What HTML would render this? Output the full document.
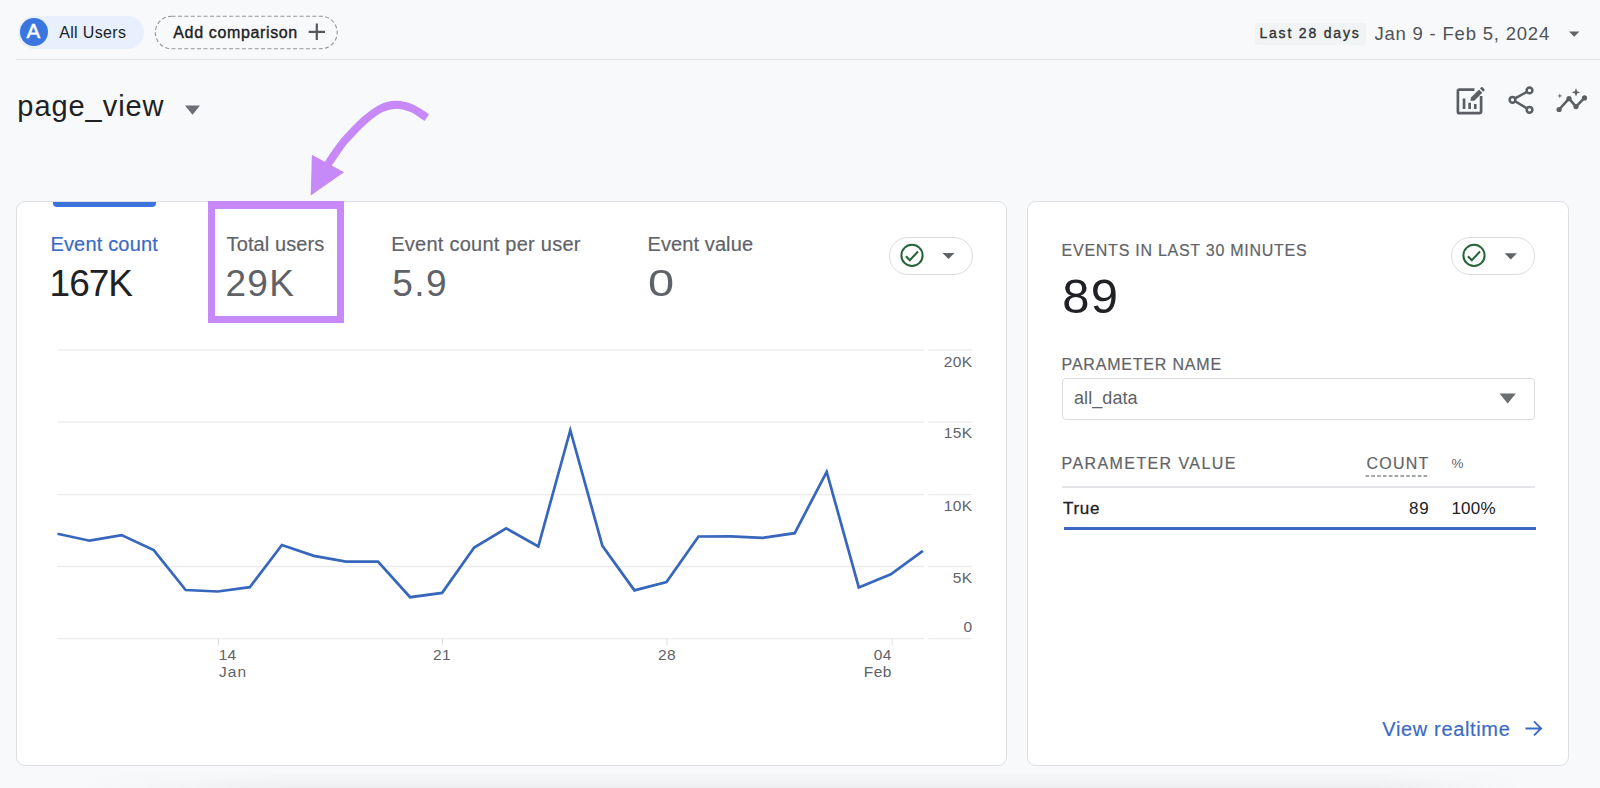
<!DOCTYPE html>
<html><head><meta charset="utf-8"><title>Analytics</title>
<style>
html,body{margin:0;padding:0;}
body{width:1600px;height:788px;overflow:hidden;position:relative;background:#f8f9fa;font-family:"Liberation Sans",sans-serif;}
.t{position:absolute;line-height:1;white-space:nowrap;}
.abs{position:absolute;box-sizing:border-box;}
.card{position:absolute;box-sizing:border-box;background:#fff;border:1px solid #dddfe3;border-radius:9px;}
svg{position:absolute;left:0;top:0;overflow:visible;}
</style></head><body>
<!--BOXES-->
<div class="abs" style="left:80px;top:771px;width:1440px;height:17px;background:linear-gradient(to bottom,rgba(60,64,67,0),rgba(60,64,67,.055));-webkit-mask-image:linear-gradient(to right,transparent,#000 15%,#000 90%,transparent);mask-image:linear-gradient(to right,transparent,#000 15%,#000 90%,transparent);"></div>
<div class="abs" style="left:16px;top:59px;width:1584px;height:1px;background:#dfe1e5;"></div>
<div class="abs" style="left:17.5px;top:15.5px;width:126.5px;height:33.7px;border-radius:17px;background:#e8f0fe;"></div>
<div class="abs" style="left:20px;top:18.2px;width:28px;height:28px;border-radius:14px;background:#3b76e0;"></div>
<div class="abs" style="left:1254.5px;top:22.5px;width:111.5px;height:22px;border-radius:3px;background:#f1f3f4;"></div>
<div class="card" style="left:15.5px;top:201px;width:991px;height:565px;"></div>
<div class="card" style="left:1027px;top:201px;width:542px;height:565px;"></div>
<div class="abs" style="left:53px;top:201.6px;width:103.2px;height:5.6px;border-radius:0 0 4px 4px;background:#3d74dc;"></div>
<div class="abs" style="left:208px;top:201px;width:135.8px;height:122.2px;border-style:solid;border-color:#c889f8;border-width:8px 7.4px 7.6px 7px;"></div>
<div class="abs" style="left:889px;top:236.5px;width:83.5px;height:38.5px;border-radius:20px;border:1px solid #dadce0;background:#fff;"></div>
<div class="abs" style="left:1451px;top:236.5px;width:83.5px;height:38.5px;border-radius:20px;border:1px solid #dadce0;background:#fff;"></div>
<div class="abs" style="left:1062px;top:378px;width:473px;height:41.5px;border-radius:4px;border:1px solid #dadce0;background:#fff;"></div>
<div class="abs" style="left:1062px;top:486px;width:473px;height:1.6px;background:#e4e6e9;"></div>
<div class="abs" style="left:1063.5px;top:527px;width:472.5px;height:3px;background:#3868c2;"></div>
<!--SVG-->
<svg width="1600" height="788" viewBox="0 0 1600 788">
<rect x="155.3" y="16.25" width="181.9" height="32.5" rx="16.25" fill="none" stroke="#92969b" stroke-width="1.1" stroke-dasharray="4 2.4"/>
<path d="M308.7 31.8H325M316.8 23.6V40" stroke="#53575b" stroke-width="2.2" fill="none"/>
<path d="M185 105.5h15l-7.5 9.3z" fill="#6b6f73"/>
<path d="M1569 31.5h10.4l-5.2 5.2z" fill="#5f6368"/>
<path d="M942.5 253h12l-6 6z" fill="#5f6368"/>
<path d="M1504.7 253.3h12.2l-6.1 6.1z" fill="#5f6368"/>
<path d="M1499.5 393.4h16.4l-8.2 10.2z" fill="#6b6f73"/>
<g fill="none" stroke="#256338" stroke-width="2">
<circle cx="912" cy="255.4" r="10.6"/><path d="M905.9 256.2l3.9 4 8.2-8.7"/>
<circle cx="1474" cy="255.4" r="10.6"/><path d="M1467.9 256.2l3.9 4 8.2-8.7"/>
</g>
<line x1="1365.6" x2="1429.6" y1="476" y2="476" stroke="#80868b" stroke-width="1.3" stroke-dasharray="3.6 2.2"/>
<g stroke="#eaecef" stroke-width="1.3" fill="none"><line x1="57.5" x2="924.2" y1="350" y2="350"/><line x1="928.4" x2="972.4" y1="350" y2="350"/><line x1="57.5" x2="924.2" y1="422.2" y2="422.2"/><line x1="928.4" x2="972.4" y1="422.2" y2="422.2"/><line x1="57.5" x2="924.2" y1="494.6" y2="494.6"/><line x1="928.4" x2="972.4" y1="494.6" y2="494.6"/><line x1="57.5" x2="924.2" y1="566.5" y2="566.5"/><line x1="928.4" x2="972.4" y1="566.5" y2="566.5"/><line x1="57.5" x2="924.2" y1="638.6" y2="638.6"/><line x1="928.4" x2="972.4" y1="638.6" y2="638.6"/></g>
<g stroke="#dcdfe3" stroke-width="1" fill="none"><line x1="218.4" x2="218.4" y1="638.6" y2="645.5"/><line x1="442.5" x2="442.5" y1="638.6" y2="645.5"/><line x1="667" x2="667" y1="638.6" y2="645.5"/><line x1="892.2" x2="892.2" y1="638.6" y2="645.5"/></g>
<polyline points="57.5,533.8 89.6,540.7 121.6,535.1 153.7,550.1 185.7,590.0 217.8,591.5 249.8,587.2 281.9,545.0 313.9,555.9 346.0,561.7 378.0,561.6 410.1,597.2 442.1,592.9 474.2,547.5 506.2,528.4 538.3,546.5 570.3,430.2 602.4,545.9 634.4,590.4 666.5,582.1 698.5,536.5 730.6,536.4 762.6,537.8 794.7,533.2 826.7,471.8 858.8,587.4 890.8,574.3 922.9,550.8" fill="none" stroke="#3766bd" stroke-width="2.7" stroke-linejoin="miter" stroke-miterlimit="10"/>
<!--ICONS-->
<g fill="none" stroke="#5b5f63" stroke-width="2.7" stroke-linejoin="round" stroke-linecap="butt">
<path d="M1474.5 89.7H1459.4a1.5 1.5 0 0 0-1.5 1.5V111.7a1.5 1.5 0 0 0 1.5 1.5H1479.6a1.5 1.5 0 0 0 1.5-1.5V96"/>
</g>
<g fill="#5b5f63">
<rect x="1462.7" y="98.5" width="2.7" height="10.5"/><rect x="1468.3" y="102.7" width="2.7" height="6.3"/><rect x="1473.9" y="104" width="2.7" height="5"/>
<path d="M1470.3 100.8L1471 97.4L1479 89.4L1482.3 92.7L1474.3 100.7z"/>
<path d="M1480 88.4L1481.1 87.3a1 1 0 0 1 1.4 0L1484.4 89.2a1 1 0 0 1 0 1.4L1483.3 91.7z"/>
</g>
<g fill="none" stroke="#5b5f63" stroke-width="2.5">
<path d="M1527 91.8L1515 98.4M1515 101.2L1527 108.4"/>
<circle cx="1529.5" cy="90.4" r="2.9"/><circle cx="1512.5" cy="99.8" r="2.9"/><circle cx="1529.5" cy="109.8" r="2.9"/>
</g>
<path d="M1559.1 109.5L1569 98.6L1576 106.6L1584.5 97.9" fill="none" stroke="#5b5f63" stroke-width="2.6" stroke-linejoin="round"/>
<g fill="#5b5f63"><circle cx="1559.1" cy="109.5" r="2.6"/><circle cx="1569" cy="98.6" r="2.6"/><circle cx="1576" cy="106.6" r="2.6"/><circle cx="1584.5" cy="97.9" r="2.6"/>
<path d="M1576 88.1L1577.1 91.2L1580.2 92.3L1577.1 93.4L1576 96.5L1574.9 93.4L1571.8 92.3L1574.9 91.2z"/>
<path d="M1559.8 93.2L1560.5 95.2L1562.5 95.9L1560.5 96.6L1559.8 98.6L1559.1 96.6L1557.1 95.9L1559.1 95.2z" opacity=".85"/>
</g>
<path d="M1525.5 728.4h15M1534 721.4l7 7-7 7" fill="none" stroke="#3a6bc4" stroke-width="2"/>
<!--ARROW-->
<path d="M426.8 117.6C421.7 114.4 416.5 110.2 411.4 108.1C406.3 106.0 401.2 104.7 396.1 104.8C391.0 104.9 386.0 106.1 380.9 108.5C375.8 110.9 370.6 115.2 365.7 119.3C360.8 123.4 355.1 129.5 351.5 133.2C347.9 136.9 346.4 138.5 343.9 141.5C341.4 144.5 339.1 147.9 336.6 151.4C334.1 154.9 331.5 158.9 329 162.6L327.6 164.8" fill="none" stroke="#c889f8" stroke-width="8"/>
<path d="M311.9 154.7L344.1 172.3L310.7 195.6z" fill="#c889f8"/>
</svg>
<!--TEXT-->
<div class="t" id="tA" style="top:21.00px;font-size:20.5px;color:#fff;-webkit-text-stroke:0.45px #fff;left:-66.60px;width:200px;text-align:center;">A</div>
<div class="t" id="tAll" style="top:25.00px;font-size:16px;color:#202124;letter-spacing:0.35px;left:59.20px;">All Users</div>
<div class="t" id="tAdd" style="top:25.00px;font-size:16px;color:#202124;letter-spacing:0.64px;-webkit-text-stroke:0.38px #202124;left:173.30px;">Add comparison</div>
<div class="t" id="tLast" style="top:26.00px;font-size:14px;color:#303336;letter-spacing:1.82px;-webkit-text-stroke:0.35px #303336;left:1259.40px;">Last 28 days</div>
<div class="t" id="tDate" style="top:25.00px;font-size:18.5px;color:#4f5358;letter-spacing:0.8px;left:1374.40px;">Jan 9 - Feb 5, 2024</div>
<div class="t" id="tPage" style="top:92.00px;font-size:29px;color:#202124;letter-spacing:0.95px;left:17.30px;">page_view</div>
<div class="t" id="m1l" style="top:234.00px;font-size:20px;color:#3a6bc4;letter-spacing:0.18px;-webkit-text-stroke:0.2px #3a6bc4;left:50.40px;">Event count</div>
<div class="t" id="m1v" style="top:265.00px;font-size:37px;color:#202124;letter-spacing:-1px;left:49.60px;">167K</div>
<div class="t" id="m2l" style="top:234.00px;font-size:20px;color:#5f6368;letter-spacing:0.1px;-webkit-text-stroke:0.2px #5f6368;left:226.60px;">Total users</div>
<div class="t" id="m2v" style="top:265.00px;font-size:37px;color:#5f6368;letter-spacing:1.2px;left:225.60px;">29K</div>
<div class="t" id="m3l" style="top:234.00px;font-size:20px;color:#5f6368;letter-spacing:0.25px;-webkit-text-stroke:0.2px #5f6368;left:391.20px;">Event count per user</div>
<div class="t" id="m3v" style="top:265.00px;font-size:37px;color:#5f6368;letter-spacing:1.5px;left:392.20px;">5.9</div>
<div class="t" id="m4l" style="top:234.00px;font-size:20px;color:#5f6368;letter-spacing:0.1px;-webkit-text-stroke:0.2px #5f6368;left:647.50px;">Event value</div>
<div class="t" id="m4v" style="top:265.00px;font-size:37px;color:#5f6368;left:647.80px;transform:scaleX(1.27);transform-origin:0 0;">0</div>
<div class="t" id="y0" style="top:354.00px;font-size:15.5px;color:#5f6368;letter-spacing:0.3px;right:627.70px;">20K</div>
<div class="t" id="y1" style="top:425.00px;font-size:15.5px;color:#5f6368;letter-spacing:0.3px;right:627.70px;">15K</div>
<div class="t" id="y2" style="top:498.00px;font-size:15.5px;color:#5f6368;letter-spacing:0.3px;right:627.70px;">10K</div>
<div class="t" id="y3" style="top:570.00px;font-size:15.5px;color:#5f6368;letter-spacing:0.3px;right:627.70px;">5K</div>
<div class="t" id="y4" style="top:619.00px;font-size:15.5px;color:#5f6368;letter-spacing:0.3px;right:627.70px;">0</div>
<div class="t" id="x14" style="top:647.00px;font-size:15.5px;color:#5f6368;letter-spacing:0.3px;left:218.70px;">14</div>
<div class="t" id="xJan" style="top:664.00px;font-size:15.5px;color:#5f6368;letter-spacing:1.1px;left:219.00px;">Jan</div>
<div class="t" id="x21" style="top:647.00px;font-size:15.5px;color:#5f6368;letter-spacing:0.3px;left:342.00px;width:200px;text-align:center;">21</div>
<div class="t" id="x28" style="top:647.00px;font-size:15.5px;color:#5f6368;letter-spacing:0.3px;left:567.00px;width:200px;text-align:center;">28</div>
<div class="t" id="x04" style="top:647.00px;font-size:15.5px;color:#5f6368;letter-spacing:0.3px;right:708.40px;">04</div>
<div class="t" id="xFeb" style="top:664.00px;font-size:15.5px;color:#5f6368;letter-spacing:0.4px;right:708.30px;">Feb</div>
<div class="t" id="rH" style="top:243.00px;font-size:16px;color:#5f6368;letter-spacing:0.74px;-webkit-text-stroke:0.2px #5f6368;left:1061.60px;">EVENTS IN LAST 30 MINUTES</div>
<div class="t" id="r89" style="top:272.00px;font-size:49px;color:#202124;letter-spacing:1.2px;left:1062.30px;">89</div>
<div class="t" id="rPN" style="top:357.00px;font-size:16px;color:#5f6368;letter-spacing:0.8px;-webkit-text-stroke:0.2px #5f6368;left:1061.60px;">PARAMETER NAME</div>
<div class="t" id="rAll" style="top:389.00px;font-size:18px;color:#5f6368;letter-spacing:0.07px;left:1074.00px;">all_data</div>
<div class="t" id="rPV" style="top:456.00px;font-size:16px;color:#5f6368;letter-spacing:1.4px;-webkit-text-stroke:0.2px #5f6368;left:1061.60px;">PARAMETER VALUE</div>
<div class="t" id="rCnt" style="top:456.00px;font-size:16px;color:#5f6368;letter-spacing:1.2px;-webkit-text-stroke:0.2px #5f6368;right:170.60px;">COUNT</div>
<div class="t" id="rPct" style="top:457.00px;font-size:13.5px;color:#5f6368;left:1451.60px;">%</div>
<div class="t" id="rTrue" style="top:500.00px;font-size:17px;color:#202124;letter-spacing:0.7px;-webkit-text-stroke:0.3px #202124;left:1063.00px;">True</div>
<div class="t" id="r89b" style="top:500.00px;font-size:17px;color:#202124;letter-spacing:0.8px;right:170.60px;">89</div>
<div class="t" id="r100" style="top:500.00px;font-size:17px;color:#202124;letter-spacing:0.25px;left:1451.40px;">100%</div>
<div class="t" id="rView" style="top:719.00px;font-size:20px;color:#3a6bc4;letter-spacing:0.65px;-webkit-text-stroke:0.2px #3a6bc4;left:1382.30px;">View realtime</div>
</body></html>
